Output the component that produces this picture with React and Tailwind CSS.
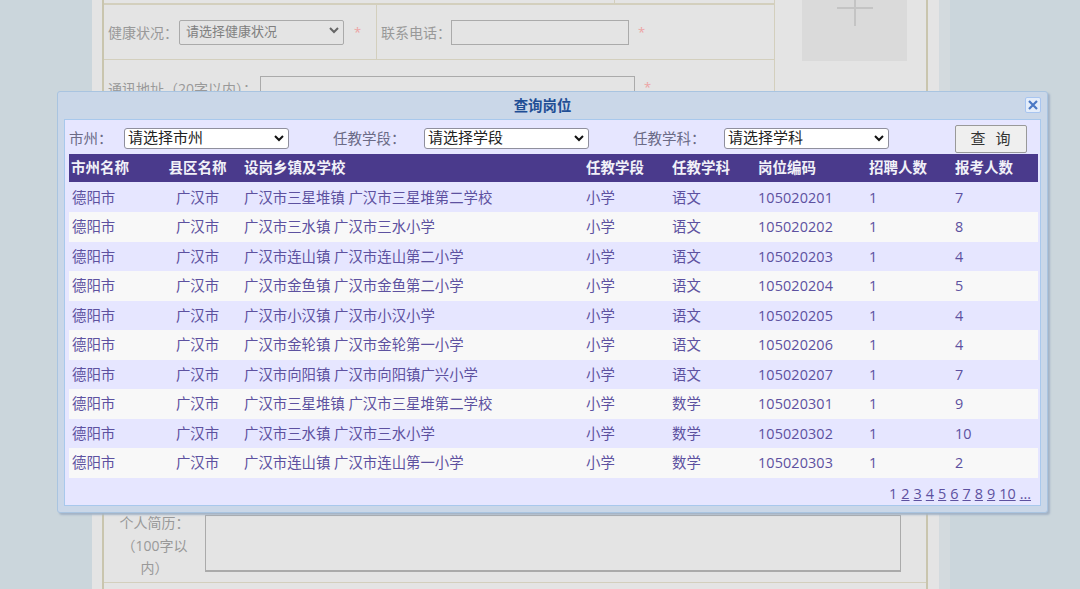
import React from "react";

const rows = [
  ["广汉市三星堆镇 广汉市三星堆第二学校", "语文", "105020201", "7"],
  ["广汉市三水镇 广汉市三水小学", "语文", "105020202", "8"],
  ["广汉市连山镇 广汉市连山第二小学", "语文", "105020203", "4"],
  ["广汉市金鱼镇 广汉市金鱼第二小学", "语文", "105020204", "5"],
  ["广汉市小汉镇 广汉市小汉小学", "语文", "105020205", "4"],
  ["广汉市金轮镇 广汉市金轮第一小学", "语文", "105020206", "4"],
  ["广汉市向阳镇 广汉市向阳镇广兴小学", "语文", "105020207", "7"],
  ["广汉市三星堆镇 广汉市三星堆第二学校", "数学", "105020301", "9"],
  ["广汉市三水镇 广汉市三水小学", "数学", "105020302", "10"],
  ["广汉市连山镇 广汉市连山第一小学", "数学", "105020303", "2"],
];

const cols = "grid grid-cols-[91px_75px_348px_86px_86px_111px_86px_86px] items-center";

const Star = () => <span className="text-[13px] text-[#eda3a3]">*</span>;

const Chevron = ({ color }) => (
  <svg className="absolute right-[4px] top-[6px]" width="10" height="7" viewBox="0 0 10 7" fill="none" stroke={color} strokeWidth="2">
    <path d="M1 1L5 5L9 1" />
  </svg>
);

// Select with its text sitting a bit above centre, as in the original page
const QuerySelect = ({ text }) => (
  <div className="relative h-[21px] w-[165px] overflow-hidden rounded-[3px] border border-[#8f8f9d] bg-white">
    <select className="-mt-[5px] block h-[27px] w-full appearance-none bg-transparent pl-[3px] text-[15px] text-[#222]">
      <option>{text}</option>
    </select>
    <Chevron color="#111" />
  </div>
);

export default function App() {
  return (
    <div className="relative flex h-[589px] w-[1080px] overflow-hidden bg-[#cbd6dc] pl-[92px] font-['Open_Sans','Noto_Sans_CJK_SC',sans-serif] text-[14px] text-[#999]">
      {/* Page behind the dialog */}
      <div className="h-full w-[847px] bg-[#e4e4e4] pl-[10px] pr-[11px]">
        <div className="h-full border-x-2 border-[#c9c5ae]">
          <div className="flex h-[509px]">
            <div className="w-[672px]">
              <div className="flex h-[5px] border-b-2 border-[#d3cfbd]">
                <div className="w-[511px] border-r border-[#d3cfbd]" />
              </div>
              <div className="flex h-[55px] items-center border-b border-[#d3cfbd]">
                <div className="flex h-full w-[273px] items-center border-r border-[#d3cfbd] pl-[4px]">
                  <span className="w-[71px]">健康状况：</span>
                  <div className="relative h-[25px] w-[165px] overflow-hidden rounded-[2px] border border-[#aaa] bg-[#e4e4e4]">
                    <select className="-mt-[2px] block h-[27px] w-full appearance-none bg-transparent pl-[6px] text-[13px] text-[#808080]">
                      <option>请选择健康状况</option>
                    </select>
                    <Chevron color="#666" />
                  </div>
                  <span className="ml-[10px]"><Star /></span>
                </div>
                <div className="flex items-center pl-[4px]">
                  <span className="w-[70px]">联系电话：</span>
                  <div className="h-[25px] w-[178px] border border-[#aaa]" />
                  <span className="ml-[9px]"><Star /></span>
                </div>
              </div>
              <div className="flex items-start pl-[4px] pt-[16px]">
                <span className="w-[152px] pt-[2px] whitespace-nowrap">通讯地址（20字以内）：</span>
                <div className="h-[30px] w-[375px] border border-[#aaa]" />
                <span className="ml-[9px]"><Star /></span>
              </div>
            </div>
            <div className="w-[152px] border-l border-[#d3cfbd] pl-[27px]">
              <div className="flex h-[61px] w-[105px] justify-center bg-[#dadada]">
                <svg width="36" height="26" viewBox="0 0 36 26" fill="none" stroke="#c4c4c4" strokeWidth="2">
                  <path d="M0 8H36M18 0V26" />
                </svg>
              </div>
            </div>
          </div>
          <div className="flex h-[74px] items-start border-b border-[#d3cfbd]">
            <div className="w-[101px] pt-[3px] text-center leading-[22.5px]">
              个人简历：<br />（100字以<br />内）
            </div>
            <div className="mt-[6px] h-[57px] w-[696px] border border-[#aaa] border-b-2" />
          </div>
        </div>
      </div>
      <div className="h-full w-[11px] bg-[#d3dade]" />

      {/* Query dialog */}
      <div className="absolute left-[57px] top-[91px] h-[422px] w-[991px] rounded-[3px] border border-[#a9c4e0] bg-[#cad7e8] px-[6px] shadow-[2px_2px_2px_#a3b3c6]">
        <div className="relative flex h-[27px] items-center justify-center pr-[20px] text-[14.4px] font-bold text-[#1f4e95]">
          查询岗位
          <div className="absolute right-0 top-[5px] flex h-[16px] w-[16px] items-center justify-center rounded-[2px] border border-[#a8c5f0] bg-[#e4edfa]">
            <svg width="10" height="10" viewBox="0 0 10 10" fill="none" stroke="#4a78c4" strokeWidth="2.2">
              <path d="M1 1L9 9M9 1L1 9" />
            </svg>
          </div>
        </div>
        <div className="h-[387px] border border-[#a8c8ec] bg-[#e6e6ff] pl-[4px] pr-[2px]">
          <div className="flex h-[34px] items-center pt-[3px] text-[14.5px] text-[#6a6a86]">
            <span className="w-[55px]">市州：</span>
            <QuerySelect text="请选择市州" />
            <span className="ml-[44px] w-[91px]">任教学段：</span>
            <QuerySelect text="请选择学段" />
            <span className="ml-[44px] w-[91px]">任教学科：</span>
            <QuerySelect text="请选择学科" />
            <button className="ml-[66px] h-[28px] w-[72px] rounded-[2px] border border-[#999] bg-[#efefef] pl-[2px] text-[15px] tracking-[3px] text-[#333]">
              查 询
            </button>
          </div>
          <div className={`${cols} h-[28px] bg-[#4a3a8c] text-[14.5px] font-bold text-[#f1f1f8]`}>
            <div className="pl-[2px]">市州名称</div>
            <div className="text-center">县区名称</div>
            <div className="pl-[9px]">设岗乡镇及学校</div>
            <div className="pl-[3px]">任教学段</div>
            <div className="pl-[3px]">任教学科</div>
            <div className="pl-[3px]">岗位编码</div>
            <div className="pl-[3px]">招聘人数</div>
            <div className="pl-[3px]">报考人数</div>
          </div>
          <div className="mt-[1px] text-[14.4px] text-[#5d51a0]">
            {rows.map((row, i) => (
              <div key={row[2]} className={`${cols} ${i % 2 === 0 ? "h-[29px] bg-[#e6e6ff]" : "h-[30px] bg-[#f8f8f8]"}`}>
                <div className="pl-[3px]">德阳市</div>
                <div className="text-center">广汉市</div>
                <div className="pl-[9px]">{row[0]}</div>
                <div className="pl-[3px]">小学</div>
                <div className="pl-[3px]">{row[1]}</div>
                <div className="pl-[3px] tracking-[0.1px]">{row[2]}</div>
                <div className="pl-[3px]">1</div>
                <div className="pl-[3px]">{row[3]}</div>
              </div>
            ))}
          </div>
          <div className="flex justify-end gap-[4px] pr-[7px] pt-[6px] text-[14.4px] leading-[20px] text-[#5d51a0]">
            <span>1</span>
            {["2", "3", "4", "5", "6", "7", "8", "9", "10", "..."].map((n) => (
              <a key={n} href="#" className="underline">{n}</a>
            ))}
          </div>
        </div>
      </div>
    </div>
  );
}
